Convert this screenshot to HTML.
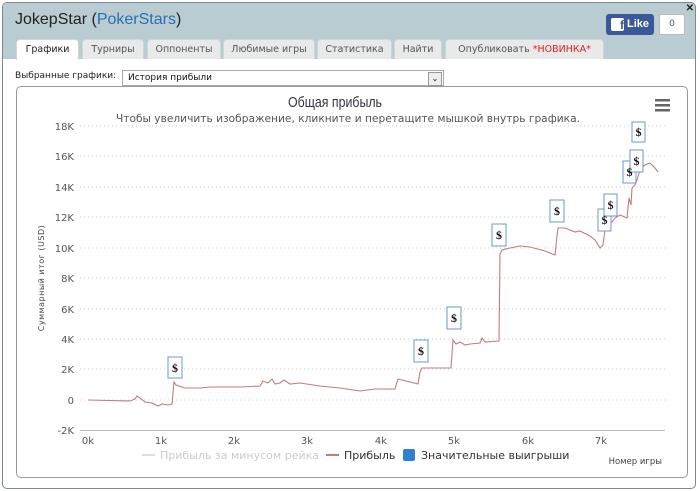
<!DOCTYPE html>
<html><head><meta charset="utf-8"><style>
body{margin:0;width:700px;height:491px;background:#fff;font-family:"DejaVu Sans","Liberation Sans",sans-serif;overflow:hidden;position:relative}
.win{position:absolute;left:2px;top:2px;width:692px;height:485px;border:1px solid #7a8a90;border-radius:5px;background:#fff;overflow:hidden}
.hd{position:absolute;left:0;top:0;width:692px;height:56px;background:#b8ccd2}
.title{position:absolute;left:12px;top:8px;font:16px "Liberation Sans",sans-serif;color:#222}
.title span{color:#2a6fb0}
.tab{position:absolute;top:36px;height:20px;background:#e8e9e9;border:1px solid #cfd6d8;border-bottom:none;border-radius:4px 4px 0 0;font-size:9.5px;color:#555;text-align:center;line-height:20px;box-sizing:border-box}
.tab.a{background:#fff;color:#222;height:21px}
.fb{position:absolute;left:603px;top:11px;width:48px;height:21px;background:#3b5998;border-radius:3px;color:#fff;font:bold 11px "Liberation Sans",sans-serif;line-height:21px}
.fb b{display:inline-block;width:13px;height:13px;background:#fff;color:#3b5998;margin:4px 3px 0 5px;vertical-align:top;line-height:15px;text-align:right;font-size:12px;border-radius:2px}
.cnt{position:absolute;left:656px;top:11px;width:24px;height:19px;border:1px solid #bbb;background:#fff;border-radius:2px;font-size:9px;color:#555;text-align:center;line-height:19px}
.lbl{position:absolute;left:12px;top:68px;font-size:9px;color:#222}
.sel{position:absolute;left:119px;top:67px;width:322px;height:16px;border:1px solid #aaa;font-size:9px;line-height:14px;color:#111;padding-left:5px;box-sizing:border-box}
.sel i{position:absolute;right:1px;top:1px;width:12px;height:12px;border:1px solid #999;background:#eee;font-style:normal;font-size:8px;line-height:12px;text-align:center}
.box{position:absolute;left:13px;top:83px;width:670px;height:390px;border:1px solid #999;border-radius:5px}
</style></head><body>
<div class="win">
<div class="hd"></div>
<div class="title">JokepStar (<span>PokerStars</span>)</div>
<div class="fb"><b>f</b>Like</div><div class="cnt">0</div>
<div style="position:absolute;right:1px;top:0;font:bold 10px sans-serif;color:#222">✕</div>
<div class="tab a" style="left:13px;width:63px">Графики</div>
<div class="tab" style="left:79px;width:62px">Турниры</div>
<div class="tab" style="left:144px;width:74px">Оппоненты</div>
<div class="tab" style="left:220px;width:92px">Любимые игры</div>
<div class="tab" style="left:314px;width:75px">Статистика</div>
<div class="tab" style="left:391px;width:48px">Найти</div>
<div class="tab" style="left:442px;width:159px">Опубликовать <span style="color:#e02020">*НОВИНКА*</span></div>
<div class="lbl">Выбранные графики:</div>
<div class="sel">История прибыли<i>⌄</i></div>
<div class="box"></div>
</div>
<svg style="position:absolute;left:0;top:0" width="700" height="491" font-family="DejaVu Sans, sans-serif">
<text x="335" y="107" font-size="15" fill="#334" text-anchor="middle" font-family="Liberation Sans, sans-serif" textLength="94" lengthAdjust="spacingAndGlyphs">Общая прибыль</text>
<text x="348" y="122" font-size="10.5" fill="#555" text-anchor="middle" textLength="464" lengthAdjust="spacingAndGlyphs">Чтобы увеличить изображение, кликните и перетащите мышкой внутрь графика.</text>
<g fill="#666"><rect x="655" y="99" width="15" height="2.5"/><rect x="655" y="104" width="15" height="2.5"/><rect x="655" y="109" width="15" height="2.5"/></g>
<g stroke="#ccc" stroke-dasharray="1,3">
<line x1="80" x2="665" y1="126" y2="126"/><line x1="80" x2="665" y1="156" y2="156"/><line x1="80" x2="665" y1="187" y2="187"/><line x1="80" x2="665" y1="217" y2="217"/><line x1="80" x2="665" y1="248" y2="248"/><line x1="80" x2="665" y1="278" y2="278"/><line x1="80" x2="665" y1="309" y2="309"/><line x1="80" x2="665" y1="339" y2="339"/><line x1="80" x2="665" y1="369" y2="369"/><line x1="80" x2="665" y1="400" y2="400"/></g>
<line x1="80" x2="665" y1="430.5" y2="430.5" stroke="#bbb"/>
<g font-size="10" fill="#555" text-anchor="end">
<text x="74" y="130">18K</text><text x="74" y="160">16K</text><text x="74" y="191">14K</text><text x="74" y="221">12K</text><text x="74" y="252">10K</text><text x="74" y="282">8K</text><text x="74" y="313">6K</text><text x="74" y="343">4K</text><text x="74" y="373">2K</text><text x="74" y="404">0</text><text x="74" y="434">-2K</text></g>
<g font-size="10" fill="#555" text-anchor="middle">
<text x="88" y="444">0k</text><text x="161" y="444">1k</text><text x="234" y="444">2k</text><text x="307" y="444">3k</text><text x="381" y="444">4k</text><text x="454" y="444">5k</text><text x="528" y="444">6k</text><text x="601" y="444">7k</text></g>
<text transform="translate(44,278) rotate(-90)" font-size="8" fill="#444" text-anchor="middle" letter-spacing="0.5">Суммарный итог (USD)</text>
<polyline fill="none" stroke="#c87a78" stroke-width="1.1" points="88,400 130,401 135,399 137,396 140,398 145,402 152,403 158,406 162,404 168,405 172,404 174,382 176,385 185,388 200,388 210,387 240,387 260,386 263,381 268,383 272,379 275,384 280,383 284,380 290,384 300,383 320,386 340,388 360,391 375,389 395,389 398,379 410,382 418,384 420,372 422,368 440,368 451,368 453,340 456,344 460,342 465,345 470,344 480,343 482,338 485,342 499,341 500,254 502,250 510,248 520,246 530,247 545,251 555,255 557,236 558,228 565,228 575,232 580,231 590,236 595,240 600,248 603,245 605,230 607,224 612,222 615,218 620,215 627,218 629,198 631,205 632,188 635,185 637,180 640,170 645,165 650,163 655,168 658,172"/>
<g fill="#fff" stroke="#6a9ad8" stroke-width="1" font-size="11" font-weight="bold" text-anchor="middle">
<rect x="168" y="357" width="14" height="21"/><rect x="414" y="340" width="14" height="22"/><rect x="447" y="307" width="14" height="22"/><rect x="492" y="224" width="14" height="22"/><rect x="550" y="200" width="14" height="22"/><rect x="598" y="209" width="13" height="22"/><rect x="604" y="194" width="13" height="22"/><rect x="623" y="161" width="13" height="22"/><rect x="630" y="150" width="13" height="22"/><rect x="632" y="122" width="13" height="20"/></g>
<g font-size="12" font-weight="bold" fill="#111" text-anchor="middle" font-family="Liberation Serif, serif">
<text x="175" y="372">$</text><text x="421" y="355">$</text><text x="454" y="322">$</text><text x="499" y="239">$</text><text x="557" y="215">$</text><text x="604.5" y="224">$</text><text x="610.5" y="209">$</text><text x="629.5" y="176">$</text><text x="636.5" y="165">$</text><text x="638.5" y="136">$</text></g>
<line x1="142" x2="155" y1="455" y2="455" stroke="#ddd" stroke-width="2"/>
<text x="160" y="459" font-size="11" fill="#ccc">Прибыль за минусом рейка</text>
<line x1="326" x2="339" y1="455" y2="455" stroke="#c87a78" stroke-width="2"/>
<text x="344" y="459" font-size="11" fill="#333">Прибыль</text>
<rect x="403" y="449" width="12" height="12" rx="2" fill="#2f7ed8"/>
<text x="421" y="459" font-size="11" fill="#333">Значительные выигрыши</text>
<text x="662" y="464" font-size="8.5" fill="#444" text-anchor="end">Номер игры</text>
</svg>
</body></html>
